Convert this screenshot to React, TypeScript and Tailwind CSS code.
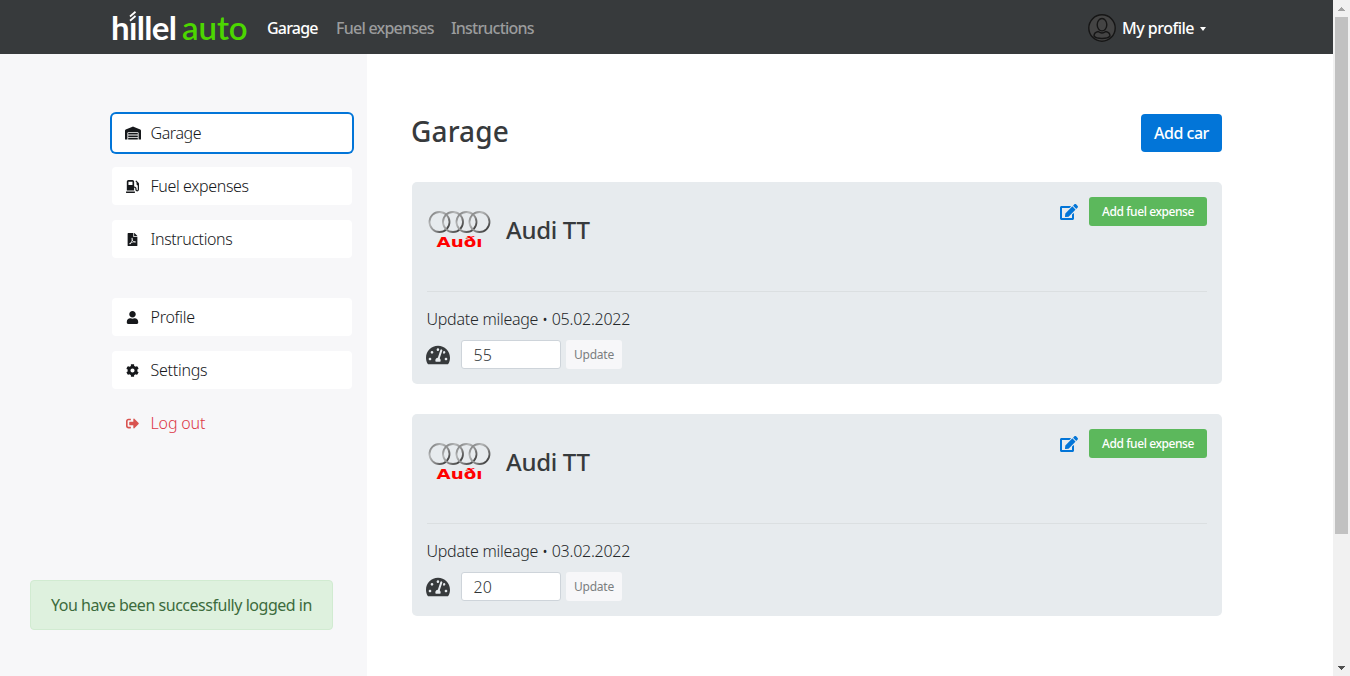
import React from "react";
import {
  FaWarehouse,
  FaGasPump,
  FaFilePdf,
  FaUser,
  FaCog,
  FaSignOutAlt,
  FaTachometerAlt,
  FaEdit,
} from "react-icons/fa";

function Logo() {
  return (
    <div className="relative flex h-[54px] w-[138px] shrink-0 items-center font-['Lato',sans-serif] text-[33px] leading-none">
      <span className="w-[71px] font-bold tracking-[-0.65px] text-white">hıllel</span>
      <span className="mt-px font-semibold tracking-[-0.1px] text-[#4cd700]">auto</span>
      <svg className="absolute left-[18px] top-[10px]" width="8" height="12" viewBox="0 0 8 12" fill="none" stroke="#fff" strokeWidth="1.8">
        <path d="M1 6.5 L6.5 1.8" />
        <path d="M1 10.8 L6.5 6" />
      </svg>
    </div>
  );
}

function Avatar() {
  return (
    <svg width="28" height="28" viewBox="0 0 28 28" fill="#444" stroke="#161616" strokeWidth="1.4">
      <circle cx="14" cy="14" r="13.2" />
      <ellipse cx="14" cy="10.7" rx="4.8" ry="6.2" />
      <path d="M10.3 17.5 C7.5 18 6 19.8 6 22 C8.5 25.3 19.5 25.3 22 22 C22 19.8 20.5 18 17.7 17.5 C15.5 19.2 12.5 19.2 10.3 17.5Z" />
    </svg>
  );
}

function Header() {
  return (
    <header className="flex h-[54px] items-center bg-[#373a3c] pl-[111px] pr-[127px] font-medium">
      <Logo />
      <nav className="ml-[18px] flex grow gap-[17px] pt-px text-[#9b9c9d]">
        <span className="w-[52px] whitespace-nowrap tracking-[-0.8px] text-white">Garage</span>
        <span className="w-[98px] whitespace-nowrap tracking-[-0.75px]">Fuel expenses</span>
        <span className="whitespace-nowrap tracking-[-0.8px]">Instructions</span>
      </nav>
      <div className="flex items-center pt-px text-white">
        <Avatar />
        <span className="ml-[6px] w-[72px] whitespace-nowrap tracking-[-0.5px]">My profile</span>
        <svg className="ml-[6px] mt-[2px]" width="6" height="4" viewBox="0 0 6 4" fill="#fff">
          <path d="M0 0H6L3 4Z" />
        </svg>
      </div>
    </header>
  );
}

type ItemProps = { icon: React.ReactNode; label: string; className?: string; track: string };

function SideItem({ icon, label, className = "bg-white text-[#16181b]", track }: ItemProps) {
  return (
    <div className={`flex h-[38px] w-[240px] items-center rounded ${className}`}>
      <span className="ml-3 flex w-[17px] justify-center">{icon}</span>
      <span className={`ml-[9.5px] whitespace-nowrap font-light ${track}`}>{label}</span>
    </div>
  );
}

function Sidebar() {
  return (
    <aside className="flex w-[367px] shrink-0 flex-col gap-[15px] bg-[#f7f7f9] pl-[112px] pt-[60px]">
      <SideItem
        icon={<FaWarehouse size={16} />}
        label="Garage"
        track="tracking-[-0.4px]"
        className="bg-white text-[#16181b] ring-2 ring-[#0275d8]"
      />
      <SideItem icon={<FaGasPump size={13} />} label="Fuel expenses" track="tracking-[-0.35px]" />
      <SideItem icon={<FaFilePdf size={13} />} label="Instructions" track="tracking-[-0.4px]" />
      <div className="h-[10px]" />
      <SideItem icon={<FaUser size={13} />} label="Profile" track="tracking-[-0.25px]" />
      <SideItem icon={<FaCog size={13} />} label="Settings" track="tracking-[-0.25px]" />
      <SideItem
        icon={<FaSignOutAlt size={13} className="text-[#d9534f]" />}
        label="Log out"
        track="tracking-[-0.15px]"
        className="text-[#dc3545]"
      />
    </aside>
  );
}

function AudiLogo() {
  return (
    <svg width="64" height="64" viewBox="0 0 64 64">
      <defs>
        <linearGradient id="ring" x1="0" y1="0" x2="1" y2="1">
          <stop offset="0" stopColor="#666" />
          <stop offset="0.3" stopColor="#b5b7b8" />
          <stop offset="0.6" stopColor="#888" />
          <stop offset="1" stopColor="#222" />
        </linearGradient>
      </defs>
      <g fill="none" stroke="url(#ring)" strokeWidth="1.8">
        <circle cx="12.5" cy="25" r="10" />
        <circle cx="26" cy="25" r="10" />
        <circle cx="39.5" cy="25" r="10" />
        <circle cx="52.5" cy="25" r="10" />
      </g>
      <text x="9.5" y="50" fill="#f00" fontFamily="DejaVu Sans" fontWeight="700" fontSize="14.5" textLength="46" lengthAdjust="spacingAndGlyphs">
        Auðı
      </text>
    </svg>
  );
}

function CarCard({ date, mileage }: { date: string; mileage: string }) {
  return (
    <section className="flex h-[202px] flex-col rounded-[5px] bg-[#e7ebee] px-[15px] pt-[15px]">
      <div className="flex h-[94px] items-start">
        <AudiLogo />
        <h3 className="ml-[15px] mt-[17px] grow whitespace-nowrap text-[24px] font-medium leading-8 tracking-[-0.3px]">Audi TT</h3>
        <FaEdit size={18} className="mr-[11px] mt-[6px] text-[#0275d8]" />
        <button className="h-[29px] w-[118px] whitespace-nowrap rounded-[3px] bg-[#5cb85c] text-[12px] font-medium tracking-[-0.42px] text-white">
          Add fuel expense
        </button>
      </div>
      <div className="border-t border-[#dbdfe1] pt-[15px]">
        <p className="-ml-[0.5px] whitespace-nowrap font-light leading-6 tracking-[-0.26px] text-[#25282a]">
          Update mileage • {date}
        </p>
        <div className="mt-[9px] flex h-[29px] items-center">
          <FaTachometerAlt size={24} className="-ml-px" />
          <div className="ml-[11px] flex h-[29px] w-[100px] items-center rounded-[3px] border border-[#ced4da] bg-white pl-[11.5px] pt-px font-light text-[#303436]">
            {mileage}
          </div>
          <button className="ml-[5px] h-[29px] w-14 rounded-[3px] bg-[#f7f7f9] text-[12px] tracking-[-0.25px] text-[#7b7e80]">
            Update
          </button>
        </div>
      </div>
    </section>
  );
}

function ScrollBar() {
  return (
    <div className="flex h-full w-[17px] shrink-0 flex-col items-center bg-[#f1f1f1]">
      <div className="flex h-[17px] items-center">
        <svg width="7" height="4" viewBox="0 0 7 4" fill="#a3a3a3" shapeRendering="crispEdges">
          <path d="M0 4L3.5 0L7 4Z" />
        </svg>
      </div>
      <div className="h-[517px] w-[13px] bg-[#c1c1c1]" />
      <div className="grow" />
      <div className="flex h-[17px] items-center">
        <svg width="7" height="4" viewBox="0 0 7 4" fill="#505050" shapeRendering="crispEdges">
          <path d="M0 0L3.5 4L7 0Z" />
        </svg>
      </div>
    </div>
  );
}

export default function App() {
  return (
    <div className="relative flex h-[676px] w-[1350px] overflow-hidden bg-white font-['Noto_Sans','Open_Sans',sans-serif] text-base text-[#373a3c]">
      <div className="flex w-[1333px] flex-col">
        <Header />
        <div className="flex grow">
          <Sidebar />
          <main className="flex w-[855px] flex-col pl-[45px] pt-[60px]">
            <div className="mb-[30px] flex h-[38px] items-center justify-between">
              <h1 className="-ml-px -mt-1 whitespace-nowrap text-[28px] font-medium leading-9 tracking-[0.15px]">Garage</h1>
              <button className="h-[38px] w-[81px] rounded bg-[#0275d8] font-medium tracking-[-0.5px] text-white">Add car</button>
            </div>
            <div className="flex flex-col gap-[30px]">
              <CarCard date="05.02.2022" mileage="55" />
              <CarCard date="03.02.2022" mileage="20" />
            </div>
          </main>
        </div>
      </div>
      <ScrollBar />
      <div className="absolute left-[30px] top-[580px] flex h-[50px] w-[303px] items-center whitespace-nowrap rounded border border-[#d1ebd1] bg-[#def1de] pl-5 tracking-[-0.47px] text-[#3c6b3c]">
        You have been successfully logged in
      </div>
    </div>
  );
}
